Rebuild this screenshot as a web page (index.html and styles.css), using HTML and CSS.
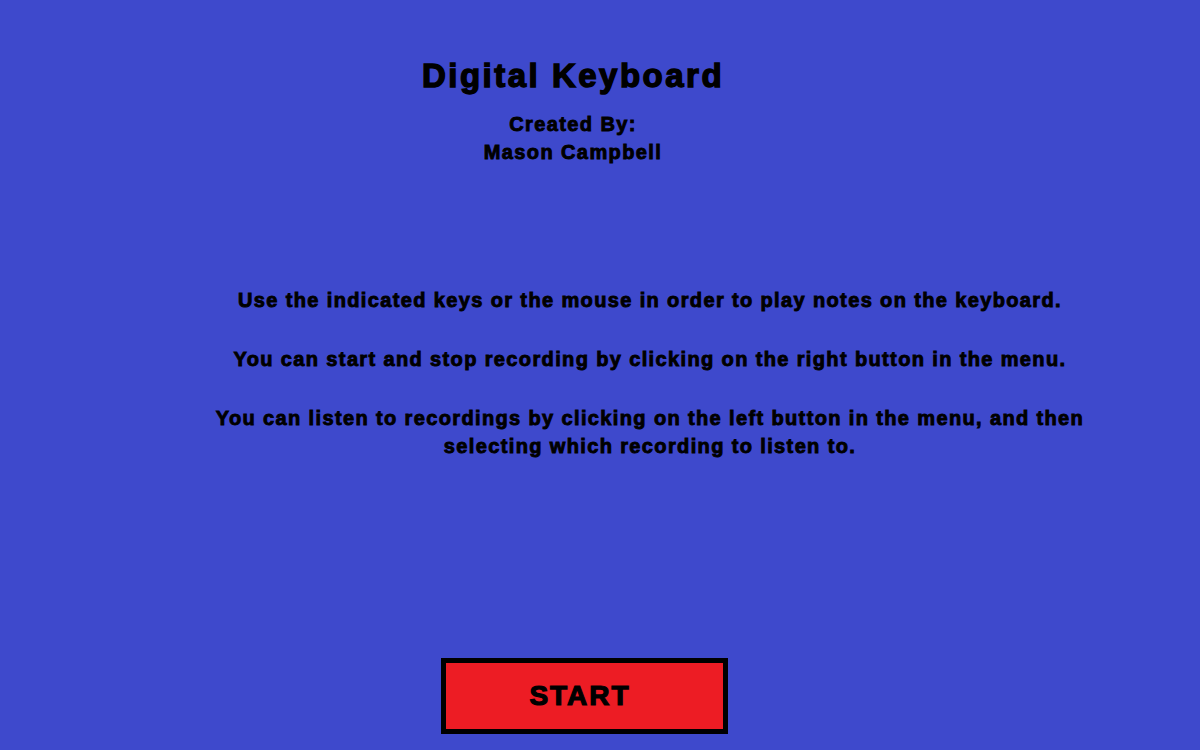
FILE: index.html
```html
<!DOCTYPE html>
<html>
<head>
<meta charset="utf-8">
<link rel="stylesheet" href="styles.css">
<title>Digital Keyboard</title>
</head>
<body>
<div class="page">
  <header class="header">
    <h1 class="title">Digital Keyboard</h1>
    <p class="credit">Created By:<br>Mason Campbell</p>
  </header>
  <section class="instructions">
    <p>Use the indicated keys or the mouse in order to play notes on the keyboard.</p>
    <p>You can start and stop recording by clicking on the right button in the menu.</p>
    <p>You can listen to recordings by clicking on the left button in the menu, and then selecting which recording to listen to.</p>
  </section>
  <div class="actions">
    <button class="start">START</button>
  </div>
</div>
</body>
</html>
```

FILE: styles.css
```css
html, body {
  margin: 0;
  padding: 0;
  background: #3e49cc;
}
.page {
  width: 1200px;
  height: 750px;
  display: flex;
  flex-direction: column;
  font-family: "Liberation Sans", Arial, sans-serif;
  font-weight: bold;
  color: #000;
  overflow: hidden;
  -webkit-text-stroke: 0.9px #000;
}
.header {
  display: flex;
  flex-direction: column;
  align-items: center;
  padding: 56px 54px 0 0;
}
.title {
  margin: 0;
  font-size: 33px;
  line-height: 40px;
  letter-spacing: 2.5px;
  -webkit-text-stroke: 1.4px #000;
}
.credit {
  margin: 14px 0 0;
  font-size: 20px;
  line-height: 28px;
  letter-spacing: 1.4px;
  text-align: center;
}
.instructions {
  padding: 120px 100px 0 200px;
  width: 900px;
  text-align: center;
  font-size: 20px;
  line-height: 28px;
  letter-spacing: 1.37px;
}
.instructions p {
  margin: 0 0 31px;
}
.actions {
  margin-top: auto;
  display: flex;
  justify-content: center;
  padding: 0 32px 16px 0;
}
.start {
  width: 287px;
  height: 76px;
  background: #ed1c24;
  border: 5px solid #000;
  font-family: "Liberation Sans", Arial, sans-serif;
  font-weight: bold;
  font-size: 28px;
  letter-spacing: 2px;
  color: #000;
  padding: 0 8px 0 0;
  -webkit-text-stroke: 1.2px #000;
}
```
